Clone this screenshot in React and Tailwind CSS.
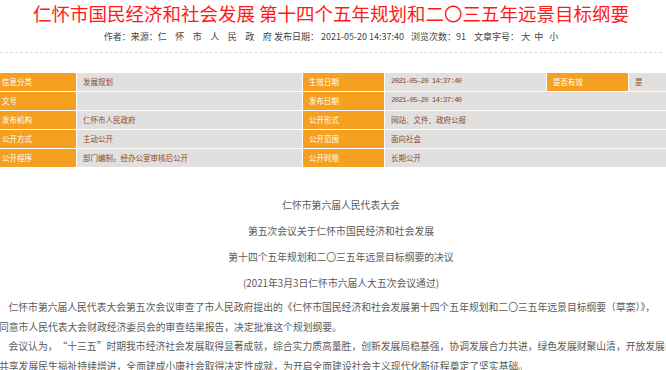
import React from "react";

const rows = [
  ["信息分类", "发展规划", "生效日期", "2021-05-20 14:37:40", "是否有效", "是"],
  ["文号", "", "发布日期", "2021-05-20 14:37:40"],
  ["发布机构", "仁怀市人民政府", "公开形式", "网站、文件、政府公报"],
  ["公开方式", "主动公开", "公开范围", "面向社会"],
  ["公开程序", "部门编制，经办公室审核后公开", "公开时限", "长期公开"],
];

function Label({ children }) {
  return (
    <div className="h-[18px] flex items-center px-[6px] bg-[#f5a021] text-white text-[7.5px] whitespace-nowrap">
      {children}
    </div>
  );
}

function Value({ children, mono, span }) {
  return (
    <div
      className={
        "h-[18px] flex items-center px-[6px] bg-[#e1e0df] text-[#8b4a2a] whitespace-nowrap " +
        (span ? "col-span-3 " : "") +
        (mono
          ? "font-['Liberation_Mono',monospace] text-[7.5px] tracking-[-0.8px]"
          : "text-[7.5px]")
      }
    >
      {children}
    </div>
  );
}

export default function App() {
  return (
    <div className="w-[666px] h-[370px] overflow-hidden bg-white font-['Noto_Sans_CJK_SC',sans-serif]">
      <div className="w-[662px] border-b border-dashed border-[#dcdcdc] pb-[7px]">
        <h1 className="text-center text-[18.5px] leading-[26px] text-[#ff1a1a] whitespace-nowrap font-normal">
          仁怀市国民经济和社会发展 第十四个五年规划和二〇三五年远景目标纲要
        </h1>
        <div className="mt-[3px] flex justify-center items-center text-[9px] leading-[16px] text-[#444] whitespace-nowrap">
          <span>作者：来源：</span>
          <span className="tracking-[8.5px]">仁怀市人民政</span>
          <span>府</span>
          <span className="ml-[2px]">发布日期：</span>
          <span className="ml-[2px]">2021-05-20 14:37:40</span>
          <span className="ml-[7px]">浏览次数：</span>
          <span>91</span>
          <span className="ml-[8px]">文章字号：</span>
          <span className="ml-[2px]">大</span>
          <span className="ml-[4px]">中</span>
          <span className="ml-[6px]">小</span>
        </div>
      </div>

      <div className="mt-[20px] ml-[-4px] w-[720px] grid grid-cols-[80px_225px_81px_161px_81px_80px] gap-px bg-white">
        {rows.map((r, i) => (
          <React.Fragment key={i}>
            <Label>{r[0]}</Label>
            <Value>{r[1]}</Value>
            <Label>{r[2]}</Label>
            {r.length === 6 ? (
              <>
                <Value mono>{r[3]}</Value>
                <Label>{r[4]}</Label>
                <Value>{r[5]}</Value>
              </>
            ) : (
              <Value span mono={r[3].startsWith("2021")}>
                {r[3]}
              </Value>
            )}
          </React.Fragment>
        ))}
      </div>

      <div className="mt-[25px] ml-[-1px] w-[684px] text-[9.8px] text-[#5a5a5a]">
        <p className="text-center leading-[26px]">仁怀市第六届人民代表大会</p>
        <p className="text-center leading-[26px]">第五次会议关于仁怀市国民经济和社会发展</p>
        <p className="text-center leading-[26px]">第十四个五年规划和二〇三五年远景目标纲要的决议</p>
        <p className="text-center leading-[26px]">(2021年3月3日仁怀市六届人大五次会议通过)</p>
        <p className="mt-[2px] leading-[19.5px] indent-[9.5px] whitespace-nowrap">
          仁怀市第六届人民代表大会第五次会议审查了市人民政府提出的《仁怀市国民经济和社会发展第十四个五年规划和二〇三五年远景目标纲要（草案）》，
          <br />
          同意市人民代表大会财政经济委员会的审查结果报告，决定批准这个规划纲要。
        </p>
        <p className="leading-[19.5px] indent-[9.5px] whitespace-nowrap">
          会议认为，　“十三五”时期我市经济社会发展取得显著成就，综合实力质高量胜，创新发展局稳基强，协调发展合力共进，绿色发展财聚山清，开放发展内外联动，
          <br />
          共享发展民生福祉持续增进，全面建成小康社会取得决定性成就，为开启全面建设社会主义现代化新征程奠定了坚实基础。
        </p>
      </div>
    </div>
  );
}
